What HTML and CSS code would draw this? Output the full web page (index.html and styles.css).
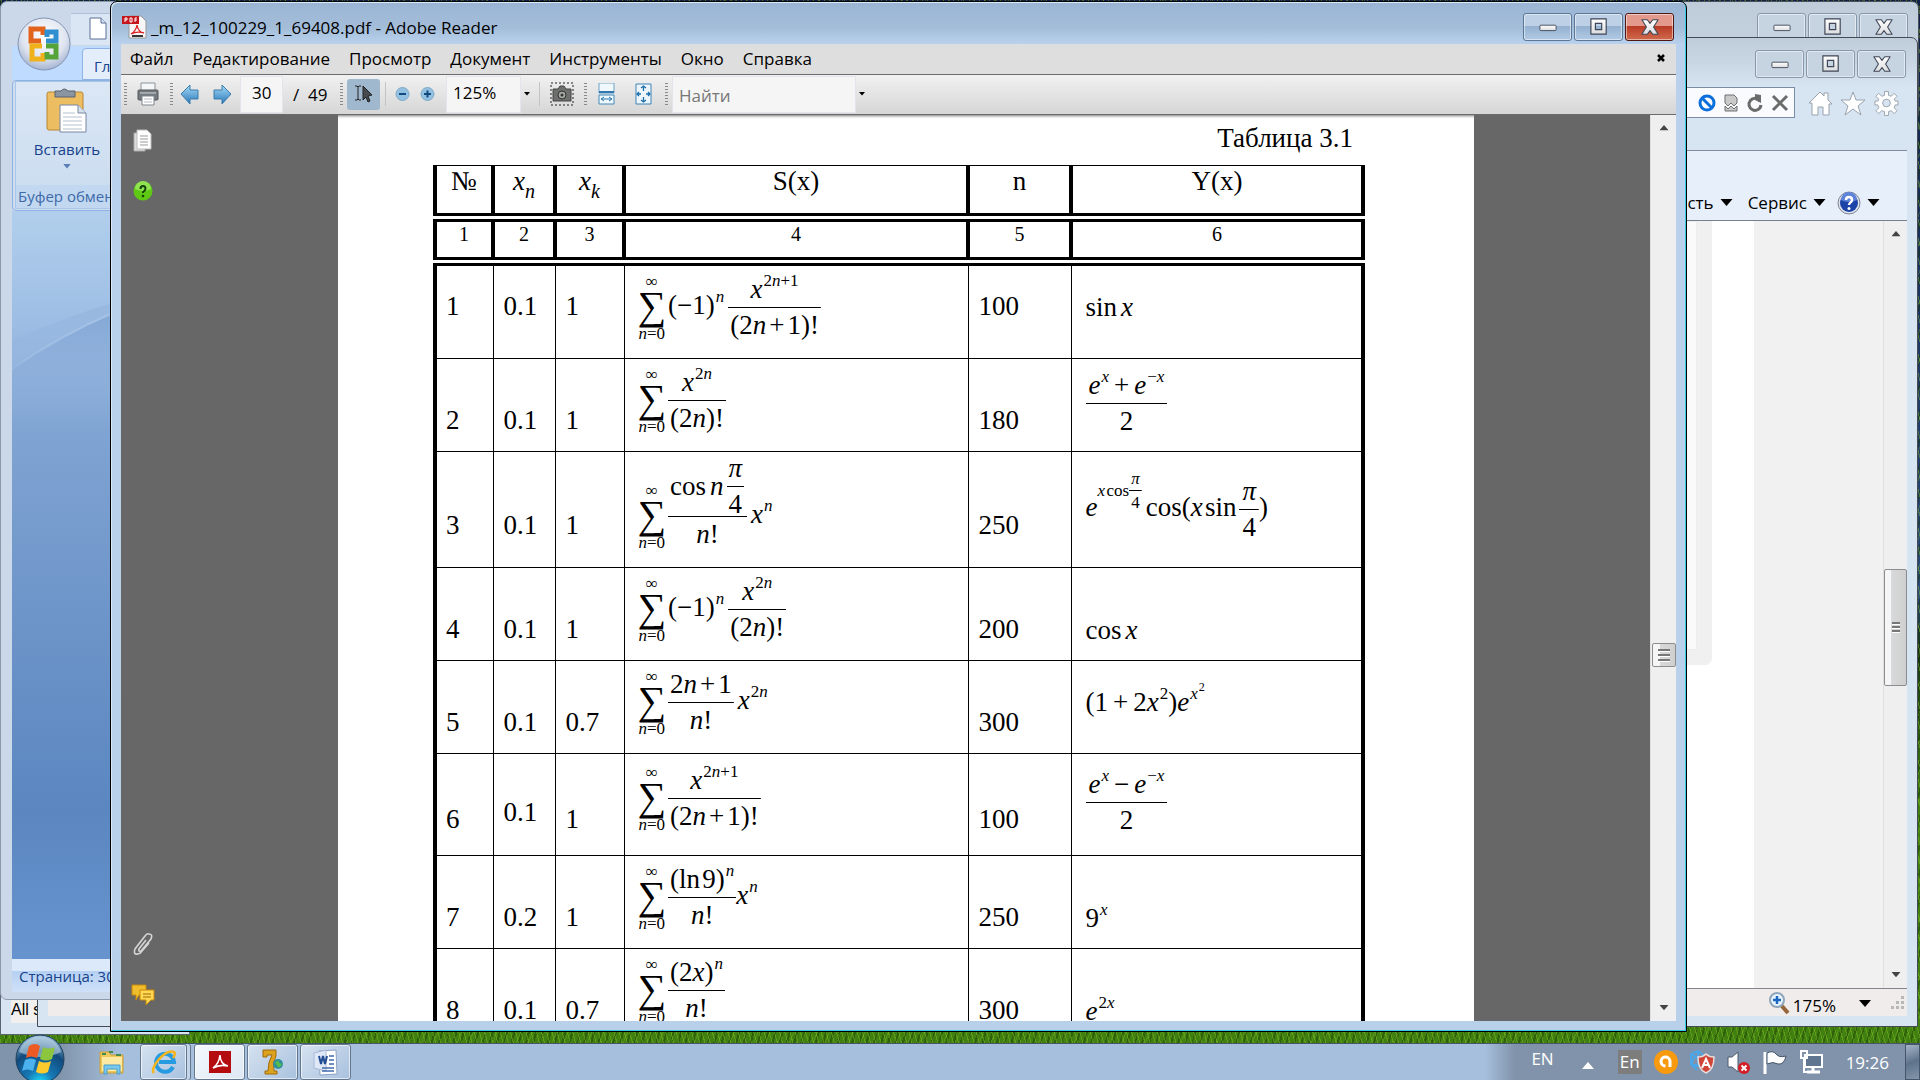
FILE: index.html
```html
<!DOCTYPE html>
<html lang="ru">
<head>
<meta charset="utf-8">
<title>_m_12_100229_1_69408.pdf - Adobe Reader</title>
<link rel="stylesheet" href="styles.css">
</head>
<body>
<svg class="defs" width="0" height="0" aria-hidden="true">
  <defs>
    <linearGradient id="blue" x1="0" y1="0" x2="0" y2="1"><stop offset="0" stop-color="#a5dbf8"/><stop offset="1" stop-color="#2a78b8"/></linearGradient>
    <linearGradient id="steel" x1="0" y1="0" x2="0" y2="1"><stop offset="0" stop-color="#ffffff"/><stop offset="1" stop-color="#dcdde0"/></linearGradient>
    <radialGradient id="orb" cx=".5" cy="1" r=".95"><stop offset="0" stop-color="#1fe0ff"/><stop offset=".3" stop-color="#1678b4"/><stop offset=".7" stop-color="#114a7c"/><stop offset="1" stop-color="#8fb4cf"/></radialGradient>
    <radialGradient id="silver" cx=".5" cy=".35" r=".7"><stop offset="0" stop-color="#ffffff"/><stop offset=".6" stop-color="#dfe5f0"/><stop offset="1" stop-color="#98a9cb"/></radialGradient>
    <symbol id="i-min" viewBox="0 0 20 20"><rect x="1" y="8" width="18" height="6" rx="1" fill="url(#steel)" stroke="#3f4656"/></symbol>
    <symbol id="i-max" viewBox="0 0 20 20"><path d="M1 1h17v17H1zM6 6v7h7V6z" fill="url(#steel)" stroke="#3f4656" stroke-width="1.3" fill-rule="evenodd"/></symbol>
    <symbol id="i-close" viewBox="0 0 20 20"><path d="M1 2h6l3 4 3-4h6l-5 8 5 8h-6l-3-4-3 4H1l5-8z" fill="url(#steel)" stroke="#3f4656" stroke-width="1.2" stroke-linejoin="round"/></symbol>
    <symbol id="i-down" viewBox="0 0 12 8"><path d="M0 0h12L6 7z"/></symbol>
    <symbol id="i-up" viewBox="0 0 12 8"><path d="M0 7h12L6 0z"/></symbol>
  </defs>
</svg>
<div class="desktop">

  <section class="window strip-window" aria-label="Панель"><span class="strip-text">All s</span></section>

  <section class="window back-window" aria-label="Окно">
    <div class="winbuttons pale">
      <button type="button" aria-label="Свернуть"><svg><use href="#i-min"/></svg></button>
      <button type="button" aria-label="Развернуть"><svg><use href="#i-max"/></svg></button>
      <button type="button" aria-label="Закрыть"><svg><use href="#i-close"/></svg></button>
    </div>
  </section>

  <section class="window ie" aria-label="Internet Explorer">
    <div class="winbuttons pale">
      <button type="button" aria-label="Свернуть"><svg><use href="#i-min"/></svg></button>
      <button type="button" aria-label="Развернуть"><svg><use href="#i-max"/></svg></button>
      <button type="button" aria-label="Закрыть"><svg><use href="#i-close"/></svg></button>
    </div>
    <div class="ie-nav">
      <div class="ie-address">
        <svg width="18" height="18" viewBox="0 0 18 18"><circle cx="9" cy="9" r="7" fill="#fff" stroke="#0b6fdc" stroke-width="3"/><path d="M4 4l10 10" stroke="#0b6fdc" stroke-width="3"/></svg>
        <svg width="14" height="18" viewBox="0 0 14 18"><path d="M1 1h9l3 3v5l-3 3-3-3-3 3-3-3zM1 17v-5l3 3 3-3 3 3 3-3v5z" fill="#c9c9c9" stroke="#6e6e6e"/></svg>
        <svg width="17" height="20" viewBox="0 0 17 20"><path d="M14 8a6 6 0 1 0 1 4" fill="none" stroke="#6b6b6b" stroke-width="3"/><path d="M9 1l6 1v8l-6-3z" fill="#6b6b6b"/></svg>
        <svg width="18" height="18" viewBox="0 0 18 18"><path d="M2 2l14 14M16 2L2 16" stroke="#6b6b6b" stroke-width="3"/></svg>
      </div>
      <div class="ie-tools">
        <svg width="25" height="26" viewBox="0 0 25 26"><path d="M1 13L12 2l4 4V3h4v7l4 4h-3v11h-6v-8h-5v8H4V13z" fill="#fff" stroke="#9aa3ad"/></svg>
        <svg width="25" height="26" viewBox="0 0 25 26"><path d="M12 2l3 8h9l-7 6 3 9-8-6-8 6 3-9-7-6h9z" fill="#fff" stroke="#9aa3ad"/></svg>
        <svg width="25" height="26" viewBox="0 0 26 26"><path d="M11 1h4v4l3 1 3-3 3 3-3 3 1 2h3v4h-3l-1 3 3 3-3 3-3-3-3 1v4h-4v-4l-3-1-3 3-3-3 3-3-1-3H1v-4h3l1-2-3-3 3-3 3 3 3-1z" fill="#fff" stroke="#9aa3ad"/><circle cx="13" cy="13" r="4" fill="#d7e5f3" stroke="#9aa3ad"/></svg>
      </div>
    </div>
    <div class="ie-body">
      <div class="ie-command">
        <span>Безопасность</span><svg width="13" height="8"><use href="#i-down"/></svg>
        <span class="ie-service">Сервис</span><svg width="13" height="8"><use href="#i-down"/></svg>
        <svg class="ie-help" width="24" height="24" viewBox="0 0 24 24"><circle cx="12" cy="12" r="11" fill="#dfe3ec" stroke="#7d8494"/><circle cx="12" cy="12" r="9" fill="#1c43a8"/><path d="M4 9a8 8 0 0 1 16 0q-8 4-16 0" fill="#5f83d8"/><path d="M9 9q0-3 3-3t3 3q0 2-2 3-1 1-1 2" fill="none" stroke="#fff" stroke-width="2.4"/><circle cx="12" cy="17.500" r="1.500" fill="#fff"/></svg>
        <svg width="13" height="8"><use href="#i-down"/></svg>
      </div>
      <div class="ie-view">
        <div class="ie-page"><div class="ie-card"><div class="ie-inner"></div></div></div>
        <div class="ie-side"></div>
        <div class="scrollbar">
          <svg class="arrow" viewBox="0 0 12 8"><use href="#i-up"/></svg>
          <div class="thumb long"><i></i><i></i><i></i></div>
          <svg class="arrow" viewBox="0 0 12 8"><use href="#i-down"/></svg>
        </div>
      </div>
      <div class="ie-status">
        <svg width="22" height="24" viewBox="0 0 22 24"><path d="M13 14l7 8" stroke="#96653c" stroke-width="4"/><circle cx="9" cy="9" r="7" fill="#e7f4fd" stroke="#8fa6ba" stroke-width="2"/><path d="M9 5v8M5 9h8" stroke="#1c66c4" stroke-width="2.500"/></svg>
        <span>175%</span><svg class="zoom-arrow" width="12" height="8"><use href="#i-down"/></svg>
        <svg width="14" height="14" viewBox="0 0 14 14" fill="#b8b8b8"><path d="M10 0h3v3h-3zM10 5h3v3h-3zM10 10h3v3h-3zM5 5h3v3H5zM5 10h3v3H5zM0 10h3v3H0z"/></svg>
      </div>
    </div>
  </section>

  <section class="window word" aria-label="Microsoft Word">
    <div class="word-title">
      <svg class="office" width="54" height="56" viewBox="0 0 54 56"><circle cx="27" cy="28" r="26" fill="url(#silver)" stroke="#8595b5"/><g fill="none" stroke-width="5"><path d="M24 25h-10V13h12v6" stroke="#e2641c"/><path d="M29 25h10V16h-9v5" stroke="#2f8fd0"/><path d="M25 30H15v13h11v-6" stroke="#f0b21c"/><path d="M29 30h10v11h-9v-5" stroke="#55a43a"/></g></svg>
      <div class="qat"><svg width="18" height="23" viewBox="0 0 18 23"><path d="M1 1h11l5 5v16H1z" fill="#fff" stroke="#5a6f96"/><path d="M12 1v5h5" fill="#d5e2f5" stroke="#5a6f96"/></svg></div>
    </div>
    <div class="word-tabs"><span class="word-tab">Главная</span></div>
    <div class="word-ribbon">
      <div class="word-group">
        <button type="button" class="paste">
          <svg width="42" height="46" viewBox="0 0 42 46"><rect x="1" y="4" width="36" height="38" rx="2" fill="#edbd62" stroke="#b98632"/><path d="M9 3h6q3-4 7 0h7v6H9z" fill="#8b95a2" stroke="#59636f"/><path d="M14 17h18l8 8v19H14z" fill="#fff" stroke="#7686a2"/><path d="M32 17v8h8" fill="#d8e2ef" stroke="#7686a2"/><path d="M17 25h12M17 29h19M17 33h19M17 37h19M17 41h19" stroke="#b4bfd0"/></svg>
          <span>Вставить</span>
          <svg class="paste-arrow" width="8" height="5" viewBox="0 0 12 8"><use href="#i-down"/></svg>
        </button>
        <div class="word-label">Буфер обмена</div>
      </div>
    </div>
    <div class="word-area">
      <svg width="100%" height="180" viewBox="0 0 560 180" preserveAspectRatio="none"><path d="M0 129Q48 108 100 91L560 0V180H0z" fill="#96b6de" opacity=".8"/><path d="M0 158Q45 125 100 101L560 0V180H0z" fill="#86a9d6"/><path d="M0 158Q45 125 100 101L560 0" fill="none" stroke="#a5c2e5" stroke-width="2"/></svg>
    </div>
    <div class="word-status">Страница: 30</div>
  </section>

  <main class="window reader" aria-label="Adobe Reader">
    <header class="titlebar">
      <svg width="25" height="24" viewBox="0 0 25 24"><path d="M7 1h12l5 5v17H7z" fill="#f7f7f7" stroke="#999"/><path d="M0 1h17v8H0z" fill="#c5161d"/><path d="M3 7V3h2v2H3M8 3v4h2V3zM13 7V3h2M13 5h2" fill="none" stroke="#fff"/><path d="M9 19q5-3 6-9 1 7 7 8-7-2-13 1" fill="none" stroke="#d22" stroke-width="1.300"/><path d="M10 21h11" stroke="#333" stroke-width="2"/></svg>
      <h1>_m_12_100229_1_69408.pdf - Adobe Reader</h1>
      <div class="winbuttons">
        <button type="button" aria-label="Свернуть"><svg><use href="#i-min"/></svg></button>
        <button type="button" aria-label="Развернуть"><svg><use href="#i-max"/></svg></button>
        <button type="button" class="close" aria-label="Закрыть"><svg><use href="#i-close"/></svg></button>
      </div>
    </header>
    <nav class="menubar">
      <button type="button">Файл</button><button type="button">Редактирование</button><button type="button">Просмотр</button><button type="button">Документ</button><button type="button">Инструменты</button><button type="button">Окно</button><button type="button">Справка</button>
      <button type="button" class="doc-close" aria-label="Закрыть документ"><svg width="8" height="8" viewBox="0 0 8 8"><path d="M1 1l6 6M7 1L1 7" stroke="#000" stroke-width="2.500"/></svg></button>
    </nav>
    <div class="toolbar">
      <span class="grip"></span>
      <button type="button" class="print" aria-label="Печать"><svg width="22" height="24" viewBox="0 0 22 24"><path d="M4 1h14v8H4z" fill="#f4f6f8" stroke="#8b949c"/><rect x="1" y="8" width="20" height="10" rx="1" fill="#74797e" stroke="#54585c"/><path d="M3 11h16" stroke="#a4a9ae" stroke-width="2"/><path d="M5 14h12v9H5z" fill="#fff" stroke="#7e868e"/><path d="M7 17h8M7 20h8" stroke="#b5babf"/></svg></button>
      <span class="grip"></span>
      <button type="button" class="prev" aria-label="Назад"><svg width="20" height="21" viewBox="0 0 20 21"><path d="M1 10L10 1v5h8v9h-8v5z" fill="url(#blue)" stroke="#3b7cab"/></svg></button>
      <button type="button" class="next" aria-label="Вперёд"><svg width="20" height="21" viewBox="0 0 20 21"><path d="M19 10L10 1v5H2v9h8v5z" fill="url(#blue)" stroke="#3b7cab"/></svg></button>
      <input class="page-no" aria-label="Страница" value="30">
      <span class="page-total">/&nbsp; 49</span>
      <span class="grip"></span>
      <button type="button" class="select-tool" aria-label="Выделение"><svg width="20" height="20" viewBox="0 0 20 20"><path d="M1 2h2l1 1 1-1h2M4 3v12M1 16h2l1-1 1 1h2" fill="none" stroke="#222"/><path d="M9 2l9 9-4 1 2 5-2 1-2-5-3 3z" fill="#474b50" stroke="#222"/></svg></button>
      <span class="sep"></span>
      <button type="button" class="zoom-out" aria-label="Уменьшить"><svg width="15" height="16" viewBox="0 0 15 16"><circle cx="7.500" cy="8" r="6.500" fill="#92c1e2" stroke="#7fa9c6"/><path d="M4 8h7" stroke="#104a7e" stroke-width="2"/></svg></button>
      <button type="button" class="zoom-in" aria-label="Увеличить"><svg width="15" height="16" viewBox="0 0 15 16"><circle cx="7.500" cy="8" r="6.500" fill="#92c1e2" stroke="#7fa9c6"/><path d="M4 8h7M7.500 4.500v7" stroke="#104a7e" stroke-width="2"/></svg></button>
      <input class="zoom-level" aria-label="Масштаб" value="125%">
      <button type="button" class="drop" aria-label="Список масштабов"><svg width="6" height="4" viewBox="0 0 12 8"><use href="#i-down"/></svg></button>
      <span class="sep"></span>
      <button type="button" class="camera" aria-label="Снимок"><svg width="24" height="24" viewBox="0 0 24 24"><rect x="1" y="1" width="22" height="22" fill="none" stroke="#222" stroke-dasharray="2 2"/><path d="M3 7h5l2-3h4l2 3h5v12H3z" fill="#6d6f6d" stroke="#444"/><circle cx="12" cy="13" r="4" fill="#a5a9a3" stroke="#303030"/><circle cx="12" cy="13" r="1.500" fill="#333"/></svg></button>
      <span class="grip"></span>
      <button type="button" class="fit-width" aria-label="По ширине"><svg width="17" height="22" viewBox="0 0 17 22"><path d="M1 0h15v10H1z" fill="#f1f8fc" stroke="#6ea3c8"/><path d="M1 9h15" stroke="#2d78ae" stroke-width="2"/><path d="M1 21v-9h15v9z" fill="#f1f8fc" stroke="#4189bb"/><path d="M4 16h9M6 14l-3 2 3 2M11 14l3 2-3 2" fill="none" stroke="#2475b0"/></svg></button>
      <button type="button" class="fit-page" aria-label="Страница целиком"><svg width="17" height="22" viewBox="0 0 17 22"><path d="M1 1h15v20H1z" fill="#eef6fb" stroke="#3d84b5"/><path d="M8.500 3v5M6 5l2.500-2L11 5M8.500 19v-5M6 17l2.500 2 2.500-2M2 11h4M4 9l-2 2 2 2M15 11h-4M13 9l2 2-2 2" fill="none" stroke="#1d6fab" stroke-width="1.300"/></svg></button>
      <span class="grip"></span>
      <input class="find" aria-label="Найти" placeholder="Найти">
      <button type="button" class="drop find-drop" aria-label="Параметры поиска"><svg width="6" height="4" viewBox="0 0 12 8"><use href="#i-down"/></svg></button>
    </div>
    <div class="workspace">
      <aside class="panes">
        <svg width="20" height="24" viewBox="0 0 20 24"><path d="M1 4h11v18H1z" fill="#ddd" stroke="#aaa"/><path d="M4 1h10l4 4v15H4z" fill="#fff" stroke="#bbb"/><path d="M7 7h8M7 10h8M7 13h8M7 16h8" stroke="#999"/></svg>
        <svg class="help-icon" width="20" height="21" viewBox="0 0 20 21"><circle cx="10" cy="10" r="9.500" fill="#5ec813"/><path d="M2 8a8 8 0 0 1 16 0q-8 4-16 0" fill="#8fe350"/><path d="M7.500 8q0-3 2.500-3t2.500 2.500q0 2-2.500 3.500v1" fill="none" stroke="#14430a" stroke-width="2"/><circle cx="10" cy="15" r="1.300" fill="#14430a"/></svg>
        <svg class="clip" width="22" height="24" viewBox="0 0 22 24"><path d="M14 8l-7 9q-1 3 2 2l10-12q2-5-2-5-2-1-4 2L3 17q-2 6 3 5 2 0 4-3l7-8" fill="none" stroke="#d5d5d5" stroke-width="1.600"/></svg>
        <svg width="24" height="22" viewBox="0 0 24 22"><path d="M1 1h14v10H8l-3 5v-5H1z" fill="#f0bd2d" stroke="#c88a0c"/><path d="M9 6h14v10h-3l-5 5v-5H9z" fill="#ffd750" stroke="#c88a0c"/><path d="M12 10h8M12 13h8" stroke="#9b6b08"/></svg>
      </aside>
      <div class="canvas">
        <article class="page">
          <table class="series">
            <caption>Таблица 3.1</caption>
            <colgroup><col class="c-no"><col class="c-xn"><col class="c-xk"><col class="c-s"><col class="c-n"><col class="c-y"></colgroup>
            <thead>
              <tr class="names"><th>№</th><th><i>x<sub>n</sub></i></th><th><i>x<sub>k</sub></i></th><th>S(x)</th><th>n</th><th>Y(x)</th></tr>
              <tr class="numbers"><th>1</th><th>2</th><th>3</th><th>4</th><th>5</th><th>6</th></tr>
            </thead>
            <tbody>
              <tr class="first"><td>1</td><td>0.1</td><td>1</td>
                <td class="s"><div class="formula"><span class="sum"><small>∞</small><b>∑</b><small><i>n</i>=0</small></span><span class="t">(−1)<sup><i>n</i></sup></span><span class="frac gap"><span><i>x</i><sup>2<i>n</i>+1</sup></span><span>(2<i>n</i><em>+</em>1)!</span></span></div></td>
                <td>100</td><td class="y"><div class="formula"><span class="t">sin<i class="arg">x</i></span></div></td></tr>
              <tr><td>2</td><td>0.1</td><td>1</td>
                <td class="s"><div class="formula"><span class="sum"><small>∞</small><b>∑</b><small><i>n</i>=0</small></span><span class="frac"><span><i>x</i><sup>2<i>n</i></sup></span><span>(2<i>n</i>)!</span></span></div></td>
                <td>180</td><td class="y y-frac"><div class="formula"><span class="frac"><span><i>e<sup>x</sup></i><em>+</em><i>e</i><sup>−<i>x</i></sup></span><span>2</span></span></div></td></tr>
              <tr class="tall"><td>3</td><td>0.1</td><td>1</td>
                <td class="s"><div class="formula"><span class="sum"><small>∞</small><b>∑</b><small><i>n</i>=0</small></span><span class="frac"><span class="row">cos<i class="arg">n</i><span class="frac nested"><span><i>π</i></span><span>4</span></span></span><span><i>n</i>!</span></span><span class="t gap"><i>x<sup>n</sup></i></span></div></td>
                <td>250</td><td class="y"><div class="formula"><span class="t"><i>e</i></span><span class="power"><i>x</i>&#8202;cos<span class="frac"><span><i>π</i></span><span>4</span></span></span><span class="t gap">cos(<i>x</i>&#8202;sin</span><span class="frac pi"><span><i>π</i></span><span>4</span></span><span class="t">)</span></div></td></tr>
              <tr><td>4</td><td>0.1</td><td>1</td>
                <td class="s"><div class="formula"><span class="sum"><small>∞</small><b>∑</b><small><i>n</i>=0</small></span><span class="t">(−1)<sup><i>n</i></sup></span><span class="frac gap"><span><i>x</i><sup>2<i>n</i></sup></span><span>(2<i>n</i>)!</span></span></div></td>
                <td>200</td><td class="y"><div class="formula"><span class="t">cos<i class="arg">x</i></span></div></td></tr>
              <tr><td>5</td><td>0.1</td><td>0.7</td>
                <td class="s"><div class="formula"><span class="sum"><small>∞</small><b>∑</b><small><i>n</i>=0</small></span><span class="frac"><span>2<i>n</i><em>+</em>1</span><span><i>n</i>!</span></span><span class="t gap"><i>x</i><sup>2<i>n</i></sup></span></div></td>
                <td>300</td><td class="y y-high"><div class="formula"><span class="t">(1<em>+</em>2<i>x</i><sup>2</sup>)<i>e</i><sup><i>x</i><sup class="inner">2</sup></sup></span></div></td></tr>
              <tr class="medium"><td>6</td><td class="raised">0.1</td><td>1</td>
                <td class="s"><div class="formula"><span class="sum"><small>∞</small><b>∑</b><small><i>n</i>=0</small></span><span class="frac"><span><i>x</i><sup>2<i>n</i>+1</sup></span><span>(2<i>n</i><em>+</em>1)!</span></span></div></td>
                <td>100</td><td class="y y-frac"><div class="formula"><span class="frac"><span><i>e<sup>x</sup></i><em>−</em><i>e</i><sup>−<i>x</i></sup></span><span>2</span></span></div></td></tr>
              <tr><td>7</td><td>0.2</td><td>1</td>
                <td class="s"><div class="formula"><span class="sum"><small>∞</small><b>∑</b><small><i>n</i>=0</small></span><span class="frac"><span>(ln&#8202;9)<sup><i>n</i></sup></span><span><i>n</i>!</span></span><span class="t"><i>x<sup>n</sup></i></span></div></td>
                <td>250</td><td class="y"><div class="formula"><span class="t">9<sup><i>x</i></sup></span></div></td></tr>
              <tr><td>8</td><td>0.1</td><td>0.7</td>
                <td class="s"><div class="formula"><span class="sum"><small>∞</small><b>∑</b><small><i>n</i>=0</small></span><span class="frac"><span>(2<i>x</i>)<sup><i>n</i></sup></span><span><i>n</i>!</span></span></div></td>
                <td>300</td><td class="y"><div class="formula"><span class="t"><i>e</i><sup>2<i>x</i></sup></span></div></td></tr>
            </tbody>
          </table>
        </article>
      </div>
      <div class="scrollbar">
        <svg class="arrow" viewBox="0 0 12 8"><use href="#i-up"/></svg>
        <div class="thumb"><i></i><i></i><i></i></div>
        <svg class="arrow" viewBox="0 0 12 8"><use href="#i-down"/></svg>
      </div>
    </div>
  </main>

  <footer class="taskbar">
    <button type="button" class="start" aria-label="Пуск"><svg width="50" height="50" viewBox="0 0 50 50"><circle cx="25" cy="25" r="24" fill="url(#orb)" stroke="#1d3e5c"/><path d="M4 18a22 22 0 0 1 42 0q-20 10-42 0" fill="#c9dfec" opacity=".55"/><path d="M14 12q6-4 11 0l-3 12q-6-3-11 0z" fill="#ee5a24"/><path d="M28 13q6 3 12 0l-3 12q-6 3-12 0z" fill="#8cc63e"/><path d="M10 26q6-3 11 0l-3 11q-6-3-11 0z" fill="#4bb2ee"/><path d="M24 27q6 3 12 0l-3 11q-6 3-12 0z" fill="#fdca2e"/></svg></button>
    <button type="button" class="task plain" aria-label="Проводник"><svg width="26" height="26" viewBox="0 0 26 26"><path d="M1 3h9l2 3h12v18H1z" fill="#eec95c" stroke="#c89e37"/><path d="M3 8h20v14H3z" fill="#fbe9a4"/><path d="M3 5h4M10 3h4M17 6h5" stroke="#3f8c4d" stroke-width="2"/><path d="M5 25v-9h16v9h-3v-5H8v5z" fill="#79c8ee" stroke="#4a9cc8"/></svg></button>
    <button type="button" class="task stacked" aria-label="Internet Explorer"><svg width="26" height="28" viewBox="0 0 26 28"><path d="M22 19a9 9 0 1 1 1-5H8" fill="none" stroke="#279be0" stroke-width="4"/><path d="M3 25C-2 20 14 1 23 4q2 2-1 6" fill="none" stroke="#f5b61d" stroke-width="2.500"/></svg></button>
    <button type="button" class="task active" aria-label="Adobe Reader"><svg width="24" height="24" viewBox="0 0 24 24"><path d="M1 1h22v22H1z" fill="#b40c0f"/><path d="M5 18q6-4 7-13 0 9 8 11-8-2-15 2" fill="none" stroke="#fff" stroke-width="1.600"/></svg></button>
    <button type="button" class="task" aria-label="1С"><svg width="22" height="26" viewBox="0 0 22 26"><path d="M1 1h13v6q-4 7-2 15h3v3H3v-3h3Q6 13 10 6H5v2H1z" fill="#dda31f" stroke="#9e6b0b"/><circle cx="16" cy="15" r="5" fill="#2e8f9e"/><path d="M13 14q3-4 4-1t3 1q-1 5-4 4z" fill="#56bb4b"/></svg></button>
    <button type="button" class="task" aria-label="Word"><svg width="26" height="27" viewBox="0 0 26 27"><path d="M6 2l17-1 1 24-17 1z" fill="#fff" stroke="#8ca2c6"/><path d="M1 4l12-3v21L1 19z" fill="#dfe8f6" stroke="#a8bad8"/><path d="M6 7l2 8 2-8 2 8 2-8" fill="none" stroke="#234d93" stroke-width="2"/><path d="M16 7h5M16 11h5M16 15h5M9 19h12M9 22h12" stroke="#426bad" stroke-width="1.500"/></svg></button>
    <div class="tray">
      <span class="lang">EN</span>
      <svg class="more" width="12" height="8" viewBox="0 0 12 8"><path d="M0 7h12L6 0z" fill="#fff"/></svg>
      <span class="lang-box">En</span>
      <svg width="24" height="24" viewBox="0 0 24 24"><circle cx="12" cy="12" r="12" fill="#f89a0d"/><path d="M16 17V11a4.500 4.500 0 1 0-4.500 5" fill="none" stroke="#fff" stroke-width="3"/></svg>
      <svg width="25" height="24" viewBox="0 0 25 24"><path d="M1 4l7-3 5 4M1 14l4-8 5 4M8 1v15L1 14M1 4l9 6 4-5M1 4v10l6 6" fill="none" stroke="#4ba7e8" stroke-width="2"/><path d="M8 7q5 0 8-3 3 3 8 3 0 13-8 16-8-3-8-16z" fill="#cf4538" stroke="#e9dede" stroke-width="1.500"/><path d="M12 18l4-9 4 9M14 15h4" fill="none" stroke="#fff" stroke-width="2"/></svg>
      <svg width="24" height="24" viewBox="0 0 24 24"><path d="M1 7h4l6-5v20l-6-5H1z" fill="#fff" stroke="#4a596c"/><circle cx="17" cy="18" r="6" fill="#d31d24"/><path d="M14.500 15.500l5 5M19.500 15.500l-5 5" stroke="#fff" stroke-width="2"/></svg>
      <svg width="24" height="24" viewBox="0 0 24 24"><path d="M2 2v22" stroke="#fff" stroke-width="3"/><path d="M4 3q6-3 9 1t10 2q-2 9-8 8-5-3-11 0z" fill="#fff" stroke="#44556a"/></svg>
      <svg width="25" height="24" viewBox="0 0 25 24"><path d="M6 5h17v12H6z" fill="#5f7590" stroke="#fff" stroke-width="2"/><path d="M14 17v4M8 22h13" stroke="#fff" stroke-width="3"/><path d="M2 1h6v7H2zM5 8v14h3" fill="none" stroke="#fff" stroke-width="2"/></svg>
      <time>19:26</time>
    </div>
    <button type="button" class="show-desktop" aria-label="Показать рабочий стол"></button>
  </footer>
</div>
</body>
</html>
```

FILE: styles.css
```css
* { box-sizing: border-box; }
body { margin: 0; font-family: "Open Sans", "Noto Sans", sans-serif; font-size: 17px; color: #000; }
button { margin: 0; padding: 0; border: 0; background: none; font: inherit; color: inherit; }
svg { display: block; flex: none; }
.defs { position: absolute; }

.desktop {
  position: relative;
  height: 100vh;
  overflow: hidden;
  background:
    repeating-linear-gradient(75deg, rgba(140, 200, 40, .4) 0 1px, transparent 1px 5px),
    repeating-linear-gradient(112deg, rgba(130, 190, 40, .3) 0 1px, transparent 1px 11px),
    repeating-linear-gradient(105deg, rgba(20, 50, 0, .4) 0 2px, transparent 2px 7px),
    linear-gradient(#10204a 0, #274a78 55%, #163312 60%, #3f8012 75%, #418010 100%);
}
.window { position: absolute; }

/* windows behind the reader */
.strip-window { left: 0; width: 190px; bottom: 45px; height: 100px; padding: 64px 0 0 10px; background: #d7e4f2; border: 1px solid #5a6470; }
.strip-text { display: block; height: 23px; background: #f1f0ef; font: 16px/20px "Liberation Sans", sans-serif; white-space: nowrap; }
.back-window { top: 1px; left: 60%; right: 1px; height: 120px; padding: 11px 10px; border: 1px solid #4b4f58; border-radius: 7px; background: linear-gradient(#bfccda, #c9d6e3); display: flex; justify-content: flex-end; align-items: flex-start; }

.winbuttons { display: flex; gap: 2px; margin-left: auto; }
.winbuttons button { display: grid; place-items: center; width: 49px; height: 28px; border: 1px solid #5b7797; border-radius: 3px; background: linear-gradient(#bdd0e6 0 45%, #94b0cf 46%, #b1cae6); box-shadow: inset 0 0 0 1px rgba(255, 255, 255, .5); }
.winbuttons svg { width: 20px; height: 18px; }
.winbuttons .close { border-color: #4f1712; background: linear-gradient(#e3998c 0 45%, #b93a25 46%, #cf6a4c); }
.winbuttons.pale button { border-color: #8797ac; background: #c6d3e1; }

.ie { top: 37px; left: 37px; right: 2px; bottom: 53px; display: flex; flex-direction: column; padding: 12px 10px 10px; border: 1px solid #444b55; border-radius: 7px 7px 0 0; background: linear-gradient(#bfccda 0, #c9d7e5 25px, #d7e4f1 50px); }
.ie .winbuttons { margin-right: 1px; }
.ie-nav { display: flex; justify-content: flex-end; padding: 9px 8px 0 0; }
.ie-address { display: flex; align-items: center; justify-content: flex-end; gap: 8px; width: 320px; height: 31px; padding-right: 5px; border: 1px solid #7b8da6; background: #f9fbfe; }
.ie-tools { display: flex; gap: 8px; padding: 3px 0 0 13px; }
.ie-body { flex: 1; display: flex; flex-direction: column; margin-top: 32px; border-top: 1px solid #7e8ba0; min-height: 0; }
.ie-command { display: flex; align-items: center; justify-content: flex-end; height: 70px; padding: 34px 27px 0 0; gap: 6px; background: #e7effb; border-bottom: 1px solid #78808e; }
.ie-service { margin-left: 9px; }
.ie-help { margin: 0 0 0 5px; }
.ie-view { flex: 1; display: flex; min-height: 0; background: #fff; }
.ie-page { flex: 1; }
.ie-card { height: 444px; margin-right: 42px; padding: 0 15px 15px 0; border-radius: 0 0 7px 0; background: #f0f0f0; }
.ie-inner { height: 100%; background: #fafafa; border: 1px solid #ececec; }
.ie-side { width: 129px; background: #f1f1f1; }
.ie-status { display: flex; align-items: center; justify-content: flex-end; height: 28px; padding-right: 2px; border-top: 1px solid #87838a; background: #f0eceb; }
.ie-status span { margin-left: 3px; padding-top: 6px; }
.zoom-arrow { margin: 2px 20px 0 23px; }

.scrollbar { display: flex; flex-direction: column; align-items: center; width: 24px; padding: 10px 0; background: #efefef; border-left: 1px solid #e0e0e0; }
.arrow { width: 10px; height: 6px; fill: #444; }
.thumb { display: flex; flex-direction: column; align-items: center; justify-content: center; gap: 2px; width: 24px; height: 24px; margin: 512px 0 auto; border: 1px solid #8d8d8d; border-radius: 2px; background: linear-gradient(90deg, #f6f6f6 0 30%, #d8d9db 31%, #cfcfcf); }
.thumb i { width: 12px; height: 3px; border-top: 2px solid #777; background: #fff; }
.long { width: 23px; height: 117px; gap: 1px; margin: 332px 0 auto; }
.long i { width: 8px; }

/* word processor */
.word { top: 1px; left: 0; width: 600px; bottom: 80px; display: flex; flex-direction: column; padding: 0 11px 7px; border: 1px solid #8c99ab; border-radius: 7px; background: #cbd8ea; color: #15428b; }
.word-title { position: relative; display: flex; height: 44px; padding-left: 59px; }
.office { position: absolute; left: 5px; top: 14px; }
.qat { flex: 1; height: 32px; margin-top: 11px; padding: 3px 0 0 18px; border-top: 1px solid #aebfd6; border-radius: 0 14px 0 0; background: #dbe6f4; }
.word-tabs { height: 34px; padding: 2px 0 0 70px; background: #bfdbff; }
.word-tab { display: block; width: 100px; height: 32px; padding-left: 11px; border: 1px solid #8db2e3; border-radius: 4px 4px 0 0; background: #e4eefb; font-size: 15px; line-height: 34px; }
.word-ribbon { height: 131px; border: 1px solid #8db2e3; border-radius: 4px; background: #cfdff1; }
.word-group { display: flex; flex-direction: column; height: 128px; margin-left: 2px; border: 1px solid #a9c6e8; background: linear-gradient(#dbe7f5, #c9dbef); }
.paste { display: flex; flex-direction: column; align-items: center; width: 74px; height: 103px; margin-left: 14px; padding-top: 6px; font-size: 15px; line-height: 30px; }
.paste-arrow { fill: #5b7fb5; }
.word-label { flex: 1; background: #c1d8f0; color: #3e6aaa; font-size: 15px; line-height: 23px; padding-left: 2px; }
.word-area { flex: 1; background: linear-gradient(#b1cfec, #9dbde4 15%, #7fa3d2 30%, #5b86c0 80%, #6794cf); }
.word-area svg { -webkit-mask: linear-gradient(#000 60%, transparent); mask: linear-gradient(#000 60%, transparent); }
.word-status { height: 33px; padding-left: 7px; background: linear-gradient(#dce9fb 0 35%, #b5d0f3 36%, #cfe1f9); font-size: 15px; line-height: 35px; }

/* reader window */
.reader { top: 1px; left: 110px; right: 233px; bottom: 48px; display: flex; flex-direction: column; padding: 0 10px 10px 10px; border: 1px solid #000; border-radius: 7px 7px 0 0; background: linear-gradient(#9ab5d4 0, #a3bdd9 25px, #b9d1ec 42px, #b9d0ea); box-shadow: inset -1px -1px #35cbe0, inset 1px 1px #d8eaf8; }
.titlebar { display: flex; align-items: center; height: 42px; padding: 8px 0 0 1px; }
.titlebar h1 { margin: 0 0 0 4px; font-size: 17px; font-weight: 400; }
.titlebar .winbuttons { align-self: flex-start; margin: 3px 2px 0 auto; }
.menubar { display: flex; align-items: center; gap: 19px; height: 31px; padding: 0 11px 2px 9px; border-bottom: 1px solid #6b6b6b; background: #dedede; }
.doc-close { margin-left: auto; }
.toolbar { display: flex; align-items: center; height: 40px; padding: 0 0 1px 3px; border-bottom: 1px solid #6b6b6b; background: linear-gradient(#f1f1f1, #d6d6d6); }
.toolbar button, .toolbar span { flex: none; }
.grip { width: 3px; height: 24px; background: radial-gradient(#888 40%, transparent 45%) 0 0 / 2px 3px; }
.sep { width: 1px; height: 24px; background: #c4c4c4; }
.print { margin: 0 11px 0 10px; }
.prev { margin: 0 12px 0 7px; }
.toolbar input { height: 37px; padding: 0 0 4px 6px; border: 1px solid #e3e5ec; background: #f5f5f5; color: #000; font: 17px "Open Sans", "Noto Sans", sans-serif; outline: 0; }
.toolbar .page-no { width: 43px; margin-left: 8px; padding: 0 0 4px 11px; }
.page-total { width: 47px; margin: 0 0 0 10px; }
.select-tool { display: grid; place-items: center; width: 33px; height: 31px; margin: 0 5px 0 4px; border-radius: 3px; background: #9fb8cd; }
.zoom-out { margin: 0 10px 0 9px; }
.toolbar .zoom-level { width: 75px; margin-left: 11px; }
.drop { margin: 0 9px 0 3px; }
.camera { margin: 0 10px; }
.fit-width { margin: 0 20px 0 11px; }
.fit-page { margin-right: 13px; }
.toolbar .find { width: 184px; margin-left: 4px; padding: 2px 0 0 6px; }
.find::placeholder { color: #777; opacity: 1; }

.workspace { flex: 1; display: flex; min-height: 0; background: #676767; }
.workspace .scrollbar { width: 26px; }
.panes { display: flex; flex-direction: column; align-items: center; width: 41px; padding: 14px 0 15px 2px; }
.help-icon { margin-top: 28px; }
.clip { margin: auto 0 28px; }
.canvas { flex: 1; min-width: 0; overflow: hidden; }
.page { width: 1136px; max-width: 100%; min-height: 100%; margin: 0 auto; padding: 8px 109px 0 95px; background: #fff; box-shadow: inset 0 4px 3px -3px #777; }

/* table of series */
.series { width: 100%; table-layout: fixed; border-collapse: collapse; border: 4px solid #000; border-top-width: 1px; border-bottom: 0; font-family: "Liberation Serif", serif; font-size: 27px; line-height: 30px; }
.series caption { height: 42px; padding-right: 12px; text-align: right; }
.c-no { width: 58px; } .c-xn { width: 62px; } .c-xk { width: 69px; } .c-s { width: 344px; } .c-n { width: 103px; }
.series th { padding: 0; border: 4px solid #000; border-top-width: 1px; border-bottom: 9px double #000; font-weight: 400; vertical-align: top; }
.series sub { font-size: 20px; line-height: 0; vertical-align: -8px; }
.names { height: 52px; }
.numbers { height: 44px; font-size: 20px; line-height: 24px; }
.series td { padding: 46px 0 0 10px; border: 1px solid #000; vertical-align: top; }
.series td:first-child { padding-left: 9px; }
.series tbody tr { height: 93px; }
.series .first { height: 97px; }
.series .tall { height: 116px; }
.series .medium { height: 102px; }
.series .first td { padding-top: 25px; }
.series .tall td { padding-top: 58px; }
.series .medium td { padding-top: 50px; }
.series .medium .raised { padding-top: 43px; }
.series td.s, .series .first td.s { padding: 5px 0 0 13px; }
.series .tall td.s { padding-top: 28px; }
.series .medium td.s { padding-top: 8px; }
.series td.y { padding-left: 14px; }
.series td.y-frac { padding-top: 26px; }
.series td.y-high { padding-top: 25px; }
.series .medium td.y-frac { padding-top: 30px; }
.series .tall td.y { padding-top: 39px; }

.formula { display: flex; align-items: center; height: 36px; white-space: nowrap; }
.s .formula { height: 72px; }
.t { padding-bottom: 4px; }
.sum { display: grid; justify-items: center; margin-right: 2px; grid-template-rows: 20px 32px 20px; }
.sum small { font-size: 17px; line-height: 22px; }
.sum b { font-size: 40px; line-height: 30px; font-weight: 400; }
.series sup { margin-left: 1px; font-size: 17px; line-height: 0; vertical-align: 12px; }
.series .inner { font-size: 12px; vertical-align: 8px; }
.series em { margin: 0 3px; font-style: normal; }
.y em { margin: 0 5px; }
.arg { margin-left: 4px; }
.frac { display: inline-grid; grid-auto-rows: 1fr; justify-items: center; line-height: 36px; background: linear-gradient(#000, #000) center / 100% 1px no-repeat; }
.frac > span { padding: 0 2px; }
.y-frac .frac > span { padding: 0 3px; }
.pi { margin-left: 3px; }
.pi > span { padding: 0 3px; }
.row { display: flex; align-items: center; }
.nested { margin: -6px 1px -6px 3px; }
.gap { margin-left: 4px; }
.power { display: flex; align-items: center; padding-bottom: 37px; font-size: 17px; }
.power .frac { line-height: 24px; }

/* taskbar */
.taskbar { position: absolute; left: 0; right: 0; bottom: 0; display: flex; align-items: stretch; height: 37px; padding-left: 15px; border-top: 1px solid #45566b; background: linear-gradient(90deg, #8094ab 0 60px, #a6bfdc 120px calc(100% - 435px), #8193aa calc(100% - 405px)); }
.start { width: 50px; margin: -10px 28px 0 0; }
.task { display: grid; place-items: center; width: 51px; margin-right: 2px; border: 1px solid #63788f; border-radius: 3px; background: linear-gradient(135deg, #d5e2f0, #a9c1de); box-shadow: inset 0 0 0 1px rgba(255, 255, 255, .6); }
.task.plain { width: 38px; margin-right: 9px; border: 0; background: none; box-shadow: none; }
.task.stacked { width: 47px; margin-right: 7px; box-shadow: inset 0 0 0 1px rgba(255, 255, 255, .6), 3px 0 #c4d5e8, 4px 0 #63788f; }
.task.active { background: linear-gradient(135deg, #f4f8fc, #dde8f4); }
.tray { display: flex; align-items: center; gap: 12px; margin-left: auto; padding-right: 16px; color: #fff; }
.lang { margin: -8px 16px 0 0; }
.more { margin: 8px 12px 0 0; }
.lang-box { width: 24px; height: 24px; background: #7d7d7d; line-height: 24px; text-align: center; }
.tray time { margin-left: 10px; }
.show-desktop { width: 15px; border: 1px solid #45566b; background: linear-gradient(160deg, #a5b5c7, #5e738b 50%, #8295aa); }
```
